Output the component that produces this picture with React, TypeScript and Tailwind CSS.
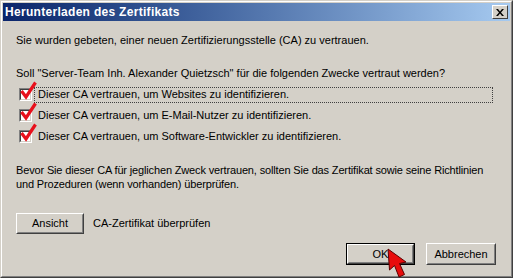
export default function App() {
  const purposes = [
    "Dieser CA vertrauen, um Websites zu identifizieren.",
    "Dieser CA vertrauen, um E-Mail-Nutzer zu identifizieren.",
    "Dieser CA vertrauen, um Software-Entwickler zu identifizieren.",
  ];

  return (
    <div
      className="relative w-[513px] h-[278px] overflow-hidden bg-[#d4d0c8] text-[11px] leading-[13px] text-black"
      style={{ fontFamily: '"Liberation Sans", Arial, sans-serif' }}
    >
      {/* window frame */}
      <div className="w-full h-full border border-t-[#d4d0c8] border-l-[#d4d0c8] border-r-[#404040] border-b-[#404040]">
        <div className="w-full h-full border border-t-white border-l-white border-r-[#808080] border-b-[#808080] p-px flex flex-col">
          {/* title bar */}
          <div className="h-[18px] flex items-center justify-between pl-[2px] pr-[2px] bg-gradient-to-r from-[#0a246a] to-[#a6caf0]">
            <span className="font-bold text-white text-[12px] tracking-[0.3px]">Herunterladen des Zertifikats</span>
            <button className="w-[16px] h-[14px] flex items-center justify-center bg-[#d4d0c8] border border-t-white border-l-white border-r-[#404040] border-b-[#404040]">
              <svg width="8" height="7" viewBox="0 0 8 7">
                <path d="M0 0h2l2 2.5L6 0h2L5 3.5 8 7H6L4 4.5 2 7H0l3-3.5z" fill="#000" />
              </svg>
            </button>
          </div>

          {/* content */}
          <div className="flex-1 flex flex-col pl-[13px] pr-[13px]">
            <p className="mt-[13px]">
              Sie wurden gebeten, einer neuen Zertifizierungsstelle (CA) zu vertrauen.
            </p>
            <p className="mt-[20px]">
              Soll "Server-Team Inh. Alexander Quietzsch" für die folgenden Zwecke vertraut werden?
            </p>

            <div className="mt-[4px] flex flex-col">
              {purposes.map((label, i) => (
                <div key={label} className="h-[21px] flex items-center pl-[3px]">
                  <div className="relative w-[13px] h-[13px] shrink-0 bg-white border border-t-[#808080] border-l-[#808080] border-r-white border-b-white">
                    <div className="w-full h-full border border-t-[#404040] border-l-[#404040] border-r-[#d4d0c8] border-b-[#d4d0c8]" />
                    <svg className="absolute left-[0px] top-[-8px]" width="17" height="19" viewBox="0 0 17 19">
                      <path d="M1.5 10 L6 16 L15.5 1.5" fill="none" stroke="#e8101c" strokeWidth="3.2" strokeLinejoin="miter" />
                    </svg>
                  </div>
                  <div
                    className={
                      "ml-[2px] h-[16px] flex items-center pl-[3px] " +
                      (i === 0 ? "w-[459px] border border-dotted border-[#404040]" : "border border-transparent")
                    }
                  >
                    {label}
                  </div>
                </div>
              ))}
            </div>

            <p className="mt-[16px] leading-[14px] whitespace-nowrap tracking-[-0.15px]">
              Bevor Sie dieser CA für jeglichen Zweck vertrauen, sollten Sie das Zertifikat sowie seine Richtlinien
              <br />
              und Prozeduren (wenn vorhanden) überprüfen.
            </p>

            <div className="mt-[22px] flex items-center">
              <button className="w-[68px] h-[21px] bg-[#d4d0c8] border border-t-white border-l-white border-r-[#404040] border-b-[#404040]">
                <div className="w-full h-full flex items-center justify-center border border-transparent border-r-[#808080] border-b-[#808080]">
                  Ansicht
                </div>
              </button>
              <span className="ml-[9px]">CA-Zertifikat überprüfen</span>
            </div>

            <div className="mt-[9px] flex justify-end gap-[11px] pr-[1px]">
              <button className="w-[69px] h-[22px] border border-black">
                <div className="w-full h-full bg-[#d4d0c8] border border-t-white border-l-white border-r-[#404040] border-b-[#404040]">
                  <div className="w-full h-full flex items-center justify-center border border-transparent border-r-[#808080] border-b-[#808080]">
                    OK
                  </div>
                </div>
              </button>
              <button className="w-[70px] h-[22px] bg-[#d4d0c8] border border-t-white border-l-white border-r-[#404040] border-b-[#404040]">
                <div className="w-full h-full flex items-center justify-center border border-transparent border-r-[#808080] border-b-[#808080]">
                  Abbrechen
                </div>
              </button>
            </div>
          </div>
        </div>
      </div>

      {/* mouse pointer over OK */}
      <svg className="absolute left-[386px] top-[248px]" width="22" height="30" viewBox="0 0 22 30">
        <path
          d="M2 1 L3.5 22 L8.5 17.5 L13 29 L18.5 26.5 L13.5 15.5 L20 14 Z"
          fill="#e80c0c"
          stroke="#5a0000"
          strokeWidth="1"
          strokeLinejoin="round"
        />
      </svg>
    </div>
  );
}
